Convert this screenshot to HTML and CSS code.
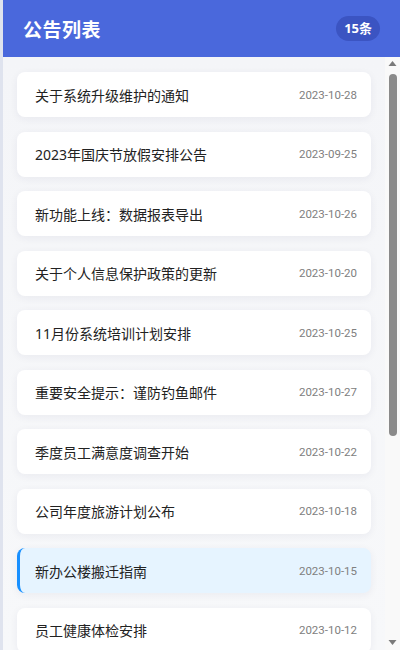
FILE: index.html
```html
<!DOCTYPE html>
<html lang="zh-CN">
<head>
<meta charset="UTF-8">
<link rel="stylesheet" href="styles.css">
</head>
<body>
<div class="app">
  <header class="header">
    <h1 class="title">公告列表</h1>
    <span class="badge">15条</span>
  </header>
  <div class="main">
    <ul class="list">
      <li class="item"><span class="name">关于系统升级维护的通知</span><span class="date">2023-10-28</span></li>
      <li class="item"><span class="name">2023年国庆节放假安排公告</span><span class="date">2023-09-25</span></li>
      <li class="item"><span class="name">新功能上线：数据报表导出</span><span class="date">2023-10-26</span></li>
      <li class="item"><span class="name">关于个人信息保护政策的更新</span><span class="date">2023-10-20</span></li>
      <li class="item"><span class="name">11月份系统培训计划安排</span><span class="date">2023-10-25</span></li>
      <li class="item"><span class="name">重要安全提示：谨防钓鱼邮件</span><span class="date">2023-10-27</span></li>
      <li class="item"><span class="name">季度员工满意度调查开始</span><span class="date">2023-10-22</span></li>
      <li class="item"><span class="name">公司年度旅游计划公布</span><span class="date">2023-10-18</span></li>
      <li class="item active"><span class="name">新办公楼搬迁指南</span><span class="date">2023-10-15</span></li>
      <li class="item"><span class="name">员工健康体检安排</span><span class="date">2023-10-12</span></li>
      <li class="item"><span class="name">年终总结会议通知</span><span class="date">2023-10-10</span></li>
      <li class="item"><span class="name">办公用品申领流程调整</span><span class="date">2023-10-08</span></li>
      <li class="item"><span class="name">新员工入职培训安排</span><span class="date">2023-10-05</span></li>
      <li class="item"><span class="name">关于加强网络安全管理的通知</span><span class="date">2023-09-30</span></li>
      <li class="item"><span class="name">食堂菜单更新公告</span><span class="date">2023-09-28</span></li>
    </ul>
    <div class="scrollbar" aria-hidden="true">
      <svg class="arrow" width="15" height="15" viewBox="0 0 15 15"><polygon points="7.5,4 11.5,9 3.5,9" fill="#7a7a7a"/></svg>
      <div class="track"><div class="thumb"></div></div>
      <svg class="arrow" width="15" height="15" viewBox="0 0 15 15"><polygon points="3.5,5 11.5,5 7.5,10" fill="#7a7a7a"/></svg>
    </div>
  </div>
</div>
</body>
</html>
```
FILE: styles.css
```css
html, body {
  margin: 0;
  padding: 0;
  height: 100%;
}
body {
  background: #dfe3ee;
  font-family: "Noto Sans", "Noto Sans CJK SC", sans-serif;
  overflow: hidden;
}
.app {
  margin-left: 3px;
  width: 397px;
  height: 650px;
  display: flex;
  flex-direction: column;
  background: #f5f6f9;
}
.header {
  flex: 0 0 57px;
  box-sizing: border-box;
  background: #4a68dc;
  display: flex;
  align-items: center;
  justify-content: space-between;
  padding: 0 20px;
  color: #fff;
}
.title {
  margin: 0;
  font-size: 19px;
  font-weight: 700;
  letter-spacing: 0.5px;
}
.badge {
  background: #3b54c2;
  border-radius: 13px;
  height: 25px;
  line-height: 25px;
  padding: 0 8px;
  font-size: 13px;
  font-weight: 700;
}
.main {
  flex: 1 1 auto;
  min-height: 0;
  display: flex;
}
.list {
  flex: 1 1 auto;
  min-width: 0;
  margin: 0;
  list-style: none;
  overflow: hidden;
  padding: 15px 14px;
  display: flex;
  flex-direction: column;
  gap: 14.5px;
  background: linear-gradient(#f4f5f8, #f7f8fa);
}
.scrollbar {
  flex: 0 0 15px;
  display: flex;
  flex-direction: column;
  background: #f9f9f9;
}
.arrow {
  display: block;
  flex: 0 0 15px;
}
.track {
  flex: 1;
  padding: 2px 3px 0 4px;
}
.thumb {
  height: 362px;
  background: #8a8a8a;
  border-radius: 4px;
}
.item {
  flex: 0 0 45px;
  box-sizing: border-box;
  background: #fff;
  border-radius: 8px;
  box-shadow: 0 2px 8px rgba(30, 40, 80, 0.06);
  display: flex;
  align-items: center;
  justify-content: space-between;
  padding: 0 14px 0 18px;
}
.item.active {
  background: #e6f4ff;
  border-left: 3px solid #1890ff;
  padding-left: 15px;
}
.name {
  font-size: 14px;
  color: #222;
}
.date {
  font-family: Roboto, "Noto Sans", sans-serif;
  font-size: 11.5px;
  color: #808080;
}
```
